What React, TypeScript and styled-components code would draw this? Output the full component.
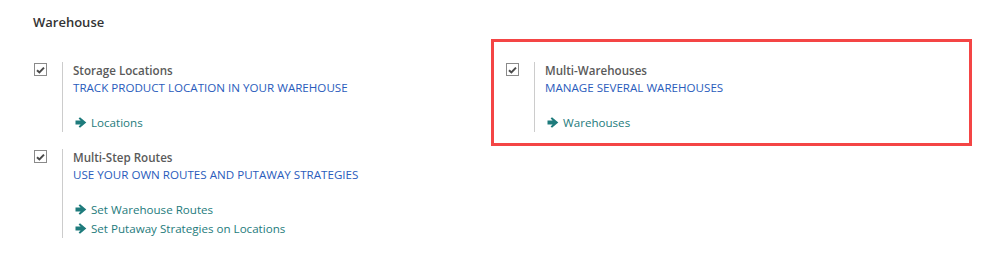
import styled, { createGlobalStyle } from 'styled-components'

// -- Global --
const GlobalStyle = createGlobalStyle`
  body {
    margin: 0;
    background-color: #ffffff;
    font-family: 'Open Sans', 'Liberation Sans', sans-serif;
  }
`

// -- Styled Components --
const Page = styled.section`
  padding: 12px 0 0 33px;
  width: 999px;
  height: 275px;
  box-sizing: border-box;
`

const Heading = styled.h2`
  margin: 0;
  font-size: 13px;
  font-weight: 600;
  line-height: 20px;
  color: #333333;
`

const Grid = styled.div`
  display: grid;
  grid-template-columns: 472px 472px;
  row-gap: 17px;
  margin-top: 30px;
`

const Item = styled.div`
  position: relative;
  display: flex;
  align-items: flex-start;
`

const Check = styled.span`
  width: 13px;
  height: 13px;
  margin: 1px 0 0 1px;
  border: 1px solid #8a8a8a;
  box-sizing: border-box;
  display: flex;
  align-items: center;
  justify-content: center;
  flex-shrink: 0;
`

const Body = styled.div`
  margin-left: 15px;
  border-left: 1px solid #cccccc;
  padding-left: 10px;
`

const Title = styled.div`
  font-size: 11.6px;
  font-weight: 600;
  line-height: 17px;
  color: #5a5a5a;
`

const Description = styled.div`
  font-size: 11.6px;
  line-height: 17px;
  color: #2a5cbc;
  text-transform: uppercase;
`

const Links = styled.div`
  margin-top: 17px;
  padding-left: 2px;
`

const LinkRow = styled.a`
  display: flex;
  align-items: center;
  gap: 4px;
  font-size: 11.6px;
  line-height: 19px;
  color: #1e7b7c;
  text-decoration: none;
`

const Highlight = styled.div`
  position: absolute;
  left: -14px;
  top: -23px;
  width: 481px;
  height: 107px;
  border: 3px solid #f44545;
  box-sizing: border-box;
  pointer-events: none;
`

// -- Icons --
const CheckMark = () => (
  <svg width="9" height="8" viewBox="0 0 9 8">
    <path d="M1 4.2 L3.4 6.4 L8 1.6" fill="none" stroke="#4a4a4a" strokeWidth="2" />
  </svg>
)

const Arrow = () => (
  <svg width="12" height="11" viewBox="0 0 12 11">
    <path
      d="M0.5 3.6 H5.6 L3.6 1.6 L5 0.2 L11.3 5.5 L5 10.8 L3.6 9.4 L5.6 7.4 H0.5 Z"
      fill="#1e7b7c"
    />
  </svg>
)

// -- Data --
type Setting = {
  title: string
  description: string
  links: string[]
  highlighted?: boolean
}

const settings: Setting[] = [
  {
    title: 'Storage Locations',
    description: 'Track product location in your warehouse',
    links: ['Locations'],
  },
  {
    title: 'Multi-Warehouses',
    description: 'Manage several warehouses',
    links: ['Warehouses'],
    highlighted: true,
  },
  {
    title: 'Multi-Step Routes',
    description: 'Use your own routes and putaway strategies',
    links: ['Set Warehouse Routes', 'Set Putaway Strategies on Locations'],
  },
]

// -- Componente --
const App = () => (
  <>
    <GlobalStyle />
    <Page>
      <Heading>Warehouse</Heading>
      <Grid>
        {settings.map((s) => (
          <Item key={s.title}>
            <Check>
              <CheckMark />
            </Check>
            <Body>
              <Title>{s.title}</Title>
              <Description>{s.description}</Description>
              <Links>
                {s.links.map((l) => (
                  <LinkRow key={l} href="#">
                    <Arrow />
                    {l}
                  </LinkRow>
                ))}
              </Links>
            </Body>
            {s.highlighted && <Highlight />}
          </Item>
        ))}
      </Grid>
    </Page>
  </>
)

export default App
